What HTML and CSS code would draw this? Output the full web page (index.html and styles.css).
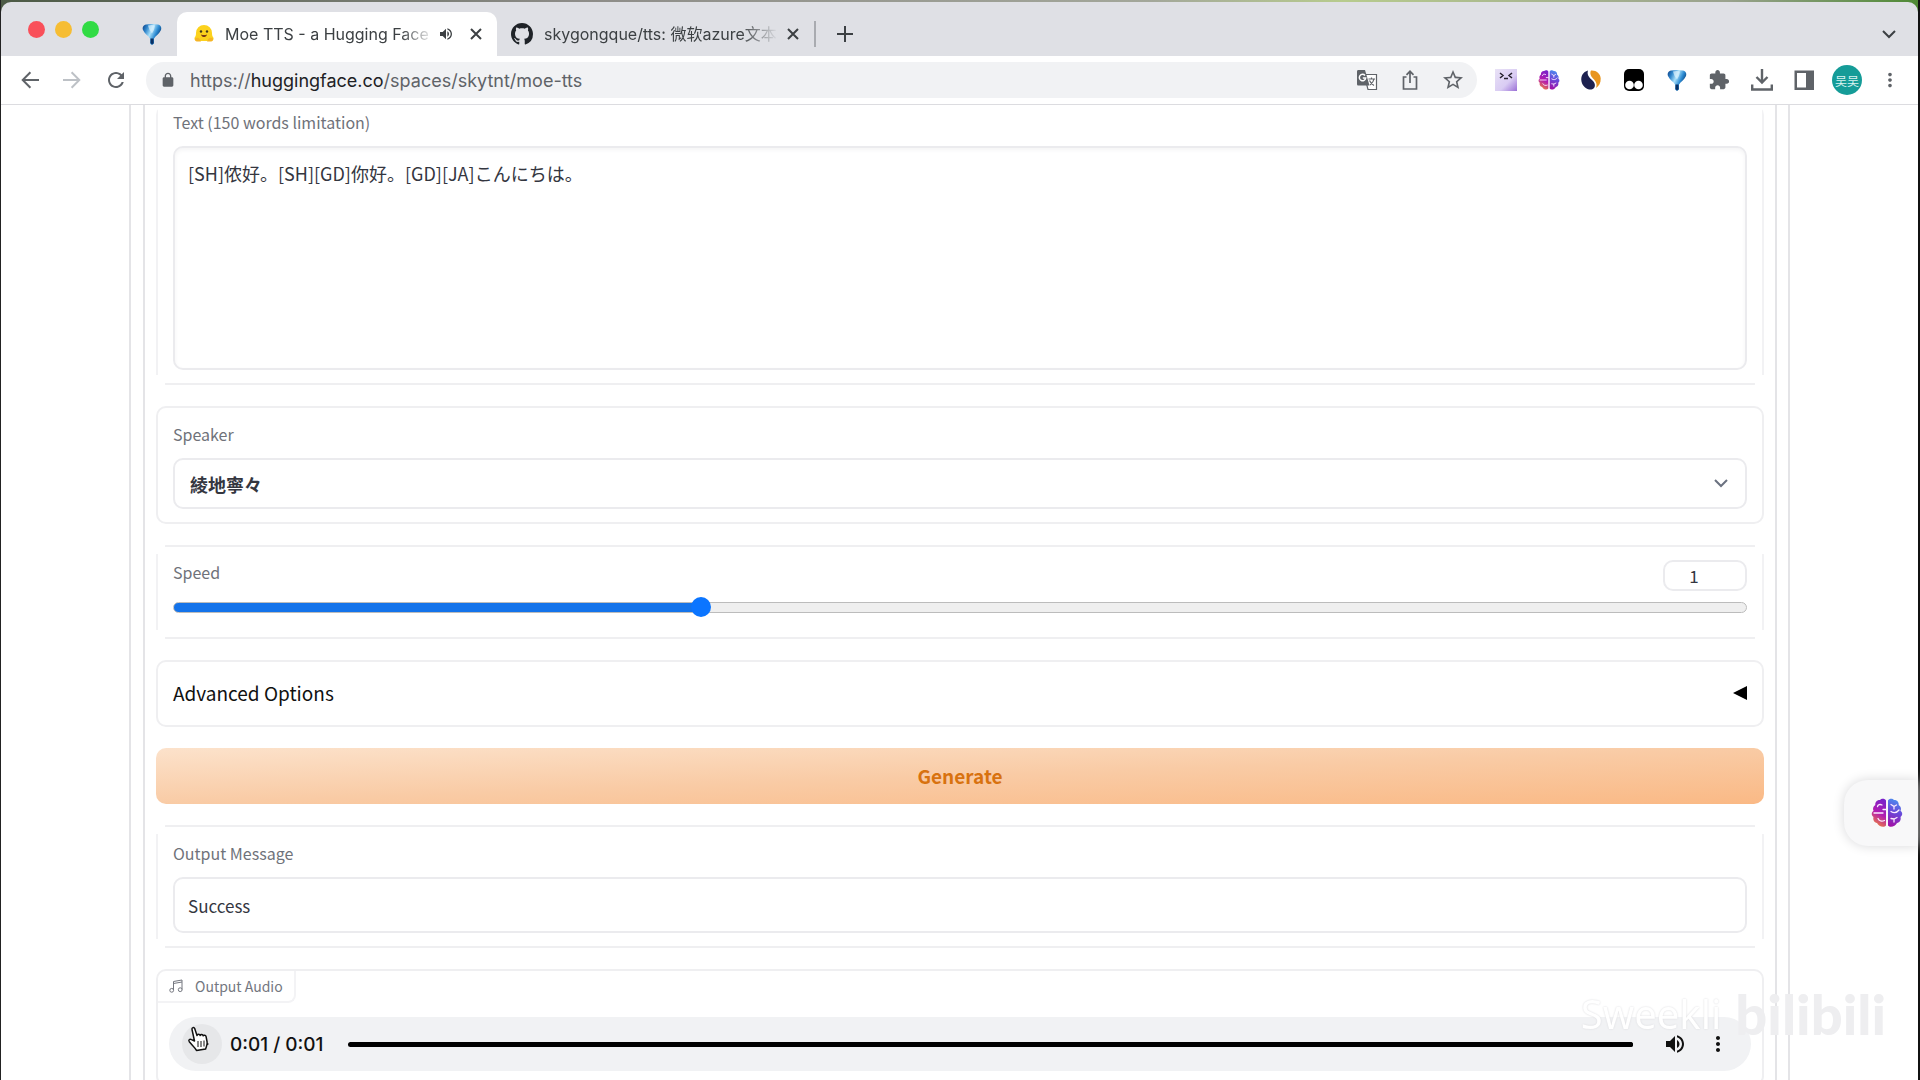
FILE: index.html
```html
<!DOCTYPE html>
<html lang="en">
<head>
  <meta charset="UTF-8">
  <meta name="viewport" content="width=device-width, initial-scale=1.0">
  <title>Moe TTS - a Hugging Face Space</title>
  <link rel="stylesheet" href="styles.css">
</head>
<body>
  <!-- shared icons -->
  <svg class="defs" aria-hidden="true">
    <defs>
      <linearGradient id="gem-fill" x1="0" y1="0" x2="1" y2=".5">
        <stop offset="0" stop-color="#0a3c82"/>
        <stop offset=".25" stop-color="#2f86cc"/>
        <stop offset=".5" stop-color="#a9e0fa"/>
        <stop offset=".75" stop-color="#2b8ad2"/>
        <stop offset="1" stop-color="#06366f"/>
      </linearGradient>
      <linearGradient id="brain-left" x1=".6" y1="0" x2=".3" y2="1">
        <stop offset="0" stop-color="#7a22c9"/>
        <stop offset=".5" stop-color="#b31bb0"/>
        <stop offset="1" stop-color="#f0843c"/>
      </linearGradient>
      <linearGradient id="brain-right" x1=".6" y1="0" x2=".4" y2="1">
        <stop offset="0" stop-color="#4a90f0"/>
        <stop offset=".5" stop-color="#6b45d8"/>
        <stop offset="1" stop-color="#a012a8"/>
      </linearGradient>
      <linearGradient id="face-fill" x1="0" y1="0" x2="1" y2="1">
        <stop offset="0" stop-color="#e9e2f6"/>
        <stop offset=".6" stop-color="#d9ccf3"/>
        <stop offset="1" stop-color="#9a6fd6"/>
      </linearGradient>
    </defs>
    <symbol id="gem" viewBox="0 0 20 22">
      <path fill="url(#gem-fill)" d="M4 1.500Q10 .5 16 1.500C18.500 2 20 4.500 19 7c-1.500 3.500-5.500 6-7 8.500v5L10 22l-2-1.500v-5C6.500 13 2.500 10.500 1 7 0 4.500 1.500 2 4 1.500z"/>
      <path fill="#dff4fd" d="M6 2.500q4-1 7 0-.5 4.500-3 8-3-3.500-4-8z" opacity=".7"/>
      <path fill="#0a2f63" d="M8.500 15.500h3V20L10 21.500 8.500 20z"/>
    </symbol>
    <symbol id="brain" viewBox="0 0 32 30">
      <path fill="url(#brain-left)" d="M15 2.500C14 .5 10.500.3 9 2 6 1.800 4 4 4.300 7 2 8.500 1.500 11 2.500 12.800.2 14.500.2 17.500 2.500 19c-.8 3 .8 5.500 3.500 6 1.500 3.500 7 5 9 2.500z"/>
      <path fill="url(#brain-right)" d="M17 2.500C18 .5 21.500.3 23 2c3-.2 5 2 4.700 5 2.300 1.500 2.800 4 1.800 5.800 2.300 1.700 2.300 4.700 0 6.200.8 3-.8 5.500-3.500 6-1.500 3.500-7 5-9 2.500z"/>
      <path fill="none" stroke="#fbeaff" stroke-width="1.300" stroke-linecap="round" d="M6.500 8.500C7 6.500 9 6 11 7M3 15h9M7 20.500c1 2.500 4 3 6.500 2M12 11.500h3M20 6.500l3 2 2.500-1.500M23 8.500v2.500M20 13.500c3 2 6 1 8-1.500M20 20.500l3 .5 3-1.500M23 21v3"/>
    </symbol>
    <symbol id="close" viewBox="0 0 14 14">
      <path fill="none" stroke="currentColor" stroke-width="2" d="M2 2l10 10M12 2L2 12"/>
    </symbol>
    <symbol id="volume" viewBox="0 0 24 24">
      <path fill="currentColor" d="M3 9v6h4l5 5V4L7 9H3zm13.500 3c0-1.770-1.020-3.290-2.500-4.030v8.050c1.480-.73 2.500-2.250 2.500-4.020zM14 3.230v2.060c2.890.86 5 3.540 5 6.710s-2.110 5.850-5 6.710v2.060c4.010-.91 7-4.490 7-8.770s-2.990-7.860-7-8.770z"/>
    </symbol>
    <symbol id="dots" viewBox="0 0 24 24">
      <path fill="currentColor" d="M12 8c1.100 0 2-.9 2-2s-.9-2-2-2-2 .9-2 2 .9 2 2 2zm0 2c-1.100 0-2 .9-2 2s.9 2 2 2 2-.9 2-2-.9-2-2-2zm0 6c-1.100 0-2 .9-2 2s.9 2 2 2 2-.9 2-2-.9-2-2-2z"/>
    </symbol>
    <symbol id="chevron" viewBox="0 0 14 10">
      <path fill="none" stroke="currentColor" stroke-width="2" d="M1 2l6 6 6-6"/>
    </symbol>
    <symbol id="arrow" viewBox="0 0 24 24">
      <path fill="currentColor" d="M21 11H7.100l6-6L11.700 3.600 3.300 12l8.400 8.400 1.400-1.400-6-6H21z"/>
    </symbol>
  </svg>

  <header class="browser">
    <div class="tab-strip">
      <div class="lights">
        <span class="light red"></span>
        <span class="light yellow"></span>
        <span class="light green"></span>
      </div>
      <button class="pinned" aria-label="Pinned tab"><svg class="icon-gem"><use href="#gem"/></svg></button>
      <div class="tab active">
        <svg class="favicon" viewBox="0 0 20 20">
          <path fill="#fcd21d" d="M10 1a8 8 0 0 1 8 8c0 2 .3 3 1.300 4.500.8 1.500-.3 3.500-2.300 3.500H3C1 17 0 15 .7 13.500 1.800 12 2 11 2 9a8 8 0 0 1 8-8z"/>
          <path fill="#f5b426" d="M1 14.500c2-1.500 4-1 5 1l1 2H3c-1.500 0-2.500-1.500-2-3zM19 14.500c-2-1.500-4-1-5 1l-1 2h4c1.500 0 2.500-1.500 2-3z"/>
          <circle cx="7" cy="7.500" r="1.200" fill="#41381c"/>
          <circle cx="13" cy="7.500" r="1.200" fill="#41381c"/>
          <path fill="#7a3b16" d="M7 10.500c2 .8 4 .8 6 0-.5 2-1.800 2.500-3 2.500s-2.500-.5-3-2.500z"/>
        </svg>
        <span class="tab-title">Moe TTS - a Hugging Face</span>
        <svg class="tab-sound"><use href="#volume"/></svg>
        <button class="tab-close" aria-label="Close tab"><svg><use href="#close"/></svg></button>
      </div>
      <div class="tab">
        <svg class="favicon github" viewBox="0 0 16 16"><path fill="#1f2328" d="M8 0C3.580 0 0 3.580 0 8c0 3.540 2.290 6.530 5.470 7.590.4.070.55-.17.55-.38 0-.19-.01-.82-.01-1.490-2.010.37-2.530-.49-2.690-.94-.09-.23-.48-.94-.82-1.130-.28-.15-.68-.52-.01-.53.63-.01 1.080.58 1.230.82.72 1.210 1.870.87 2.330.66.07-.52.28-.87.51-1.070-1.780-.2-3.640-.89-3.640-3.950 0-.87.31-1.590.82-2.150-.08-.2-.36-1.020.08-2.120 0 0 .67-.21 2.200.82.64-.18 1.320-.27 2-.27s1.360.09 2 .27c1.530-1.040 2.200-.82 2.200-.82.44 1.100.16 1.920.08 2.120.51.56.82 1.270.82 2.150 0 3.070-1.870 3.750-3.650 3.950.29.25.54.73.54 1.480 0 1.070-.01 1.930-.01 2.200 0 .21.15.46.55.38A8.010 8.010 0 0 0 16 8c0-4.420-3.580-8-8-8z"/></svg>
        <span class="tab-title">skygongque/tts: 微软azure文本</span>
        <button class="tab-close" aria-label="Close tab"><svg><use href="#close"/></svg></button>
      </div>
      <button class="new-tab" aria-label="New tab"><svg viewBox="0 0 18 18"><path fill="none" stroke="currentColor" stroke-width="2" d="M9 1v16M1 9h16"/></svg></button>
      <button class="tab-search" aria-label="Search tabs"><svg><use href="#chevron"/></svg></button>
    </div>

    <div class="toolbar">
      <nav class="nav-buttons">
        <button aria-label="Back"><svg><use href="#arrow"/></svg></button>
        <button class="forward" aria-label="Forward"><svg><use href="#arrow"/></svg></button>
        <button aria-label="Reload"><svg viewBox="0 0 24 24"><path fill="currentColor" d="M17.650 6.350C16.200 4.900 14.210 4 12 4c-4.420 0-7.990 3.580-7.990 8s3.570 8 7.990 8c3.730 0 6.840-2.550 7.730-6h-2.080c-.82 2.330-3.040 4-5.650 4-3.310 0-6-2.690-6-6s2.690-6 6-6c1.660 0 3.140.69 4.220 1.780L13 11h7V4l-2.350 2.350z"/></svg></button>
      </nav>
      <div class="address">
        <svg class="lock" viewBox="0 0 24 24"><path fill="currentColor" d="M18 8h-1V6c0-2.760-2.240-5-5-5S7 3.240 7 6v2H6c-1.100 0-2 .9-2 2v10c0 1.100.9 2 2 2h12c1.100 0 2-.9 2-2V10c0-1.100-.9-2-2-2zM9 6c0-1.660 1.340-3 3-3s3 1.340 3 3v2H9V6z"/></svg>
        <a class="url" href="#">https://<b>huggingface.co</b>/spaces/skytnt/moe-tts</a>
        <div class="address-icons">
          <button aria-label="Translate">
            <svg viewBox="0 0 22 22">
              <path fill="#fff" stroke="currentColor" stroke-width="1.200" d="M8 5.500h12.500V20.500H12z"/>
              <path fill="currentColor" d="M2.500 1H9l4.500 15.500h-11C1.500 16.500 1 16 1 15V2.500C1 1.500 1.500 1 2.500 1z"/>
              <path fill="none" stroke="#fff" stroke-width="1.500" d="M9 6.500A3.200 3.200 0 1 0 9.700 9H6.800"/>
              <path fill="none" stroke="currentColor" stroke-width="1.200" d="M12.500 10h6.500M15.500 8.500V10M18 10c-.5 2.500-2 4.500-4 6M13.500 11.500c1 2 2.500 4 4.500 5"/>
            </svg>
          </button>
          <button aria-label="Share"><svg viewBox="0 0 22 22"><path fill="none" stroke="currentColor" stroke-width="1.700" d="M7.500 8H4.500v12h13V8h-3M11 14V2.500M7.500 5.800L11 2.300l3.500 3.500"/></svg></button>
          <button aria-label="Bookmark"><svg viewBox="1 1 22 22"><path fill="currentColor" d="M22 9.240l-7.190-.62L12 2 9.190 8.630 2 9.240l5.460 4.730L5.820 21 12 17.270 18.180 21l-1.630-7.030L22 9.240zM12 15.400l-3.760 2.270 1-4.280-3.320-2.880 4.380-.38L12 6.100l1.710 4.040 4.380.38-3.320 2.880 1 4.280L12 15.400z"/></svg></button>
        </div>
      </div>
      <div class="extensions">
        <button aria-label="Face extension">
          <svg viewBox="0 0 22 22"><path fill="url(#face-fill)" d="M0 0h22v22H0z"/><path fill="none" stroke="#26222e" stroke-width="1.500" d="M5 4l3 2.500L5 9M17 4l-3 2.500L17 9M9 9.500h4"/></svg>
        </button>
        <button aria-label="Brain extension"><svg><use href="#brain"/></svg></button>
        <button aria-label="Swirl extension">
          <svg viewBox="0 0 22 22"><path fill="#1d2150" d="M8 1.500C3 3 .5 7 1.500 12.500 2.500 17.500 7 21 11.500 20.500c4-.8 4.500-5.500 1.500-8.500C9.500 9 6.500 6 8 1.500z"/><path fill="#e8951f" d="M11 1.500c5-.5 9.500 3 9.700 8 .2 4.500-1.700 7.500-4.700 9.500 1.500-4 0-6.500-3-9.500-2-2.300-3.500-5-2-8z"/></svg>
        </button>
        <button aria-label="Mask extension">
          <svg viewBox="0 0 22 22"><rect x="1" width="20" height="22" rx="5" fill="#000"/><circle cx="6.500" cy="16" r="4.300" fill="#fff"/><circle cx="15.500" cy="16" r="4.300" fill="#fff"/></svg>
        </button>
        <button aria-label="Gem extension"><svg><use href="#gem"/></svg></button>
        <button aria-label="Extensions"><svg viewBox="0 0 24 24"><path fill="currentColor" d="M20.500 11H19V7c0-1.100-.9-2-2-2h-4V3.500C13 2.120 11.880 1 10.500 1S8 2.120 8 3.500V5H4c-1.100 0-1.990.9-1.990 2v3.800H3.500c1.490 0 2.700 1.210 2.700 2.700s-1.210 2.700-2.700 2.700H2V20c0 1.100.9 2 2 2h3.800v-1.500c0-1.490 1.210-2.700 2.700-2.700 1.490 0 2.700 1.210 2.700 2.700V22H17c1.100 0 2-.9 2-2v-4h1.500c1.380 0 2.500-1.120 2.500-2.500S21.880 11 20.500 11z"/></svg></button>
        <button aria-label="Downloads"><svg viewBox="0 0 22 22"><path fill="none" stroke="currentColor" stroke-width="2.400" d="M11 0v13M5.500 8l5.500 5.500L16.500 8M1.200 15.500v5h19.600v-5"/></svg></button>
        <button aria-label="Side panel"><svg viewBox="0 0 22 22"><path fill="currentColor" fill-rule="evenodd" d="M1.500 1.500h19.500v19.500H1.500zM4 4v14.500h9V4z"/></svg></button>
        <button class="avatar" aria-label="Profile">吴吴</button>
        <button aria-label="Menu"><svg><use href="#dots"/></svg></button>
      </div>
    </div>
  </header>

  <main class="page">
    <div class="outer">
      <div class="inner">
        <section class="block open first">
          <label for="text">Text (150 words limitation)</label>
          <textarea id="text" class="field">[SH]侬好。[SH][GD]你好。[GD][JA]こんにちは。</textarea>
        </section>

        <section class="block">
          <label for="speaker">Speaker</label>
          <div class="select-wrap">
            <select id="speaker" class="field">
              <option>綾地寧々</option>
            </select>
            <svg><use href="#chevron"/></svg>
          </div>
        </section>

        <section class="block open speed">
          <div class="speed-head">
            <label for="speed">Speed</label>
            <input type="number" class="field" aria-label="Speed value" value="1">
          </div>
          <input type="range" id="speed" min="0.5" max="2" step="0.1" value="1">
        </section>

        <button class="block accordion">
          <span>Advanced Options</span>
          <svg viewBox="0 0 14 14"><path d="M14 0v14L0 7z"/></svg>
        </button>

        <button class="generate">Generate</button>

        <section class="block open">
          <label for="message">Output Message</label>
          <input type="text" id="message" class="field" value="Success" readonly>
        </section>

        <section class="block audio">
          <div class="audio-label">
            <svg viewBox="0 0 14 14"><path fill="none" stroke="currentColor" d="M4.500 11V2.500l8.500-1.500v9.500M4.500 4.500L13 3"/><circle cx="2.700" cy="11.300" r="1.900" fill="none" stroke="currentColor"/><circle cx="11.200" cy="10.700" r="1.900" fill="none" stroke="currentColor"/></svg>
            Output Audio
          </div>
          <div class="player">
            <button class="play" aria-label="Play">
              <svg viewBox="0 0 24 24"><path d="M8 5v14l11-7z"/></svg>
              <svg class="cursor" viewBox="0 0 22 26"><path fill="#fff" stroke="#111" stroke-width="1.500" stroke-linejoin="round" d="M7.500 15L5 3.500C4.600 1.500 7 .8 7.700 2.600L10 9.500c.3-1.700 2.700-1.800 3.200 0 .5-1.400 2.700-1.200 3 .3.700-1 2.600-.7 2.900.8l1 5.400c.5 3-1 5-1.500 7L9.500 24.500C8.500 22 4.500 18.500 2.300 15.700 1 13.800 3 12.500 4.500 13.600z"/><path fill="none" stroke="#111" d="M11 15v6M14 15v6M17 14.500v6"/></svg>
            </button>
            <span class="time">0:01 / 0:01</span>
            <input type="range" class="seek" aria-label="Position" min="0" max="1" step="0.01" value="1">
            <button aria-label="Mute"><svg><use href="#volume"/></svg></button>
            <button aria-label="More"><svg><use href="#dots"/></svg></button>
          </div>
        </section>
      </div>
    </div>
  </main>

  <button class="assistant" aria-label="Assistant"><svg><use href="#brain"/></svg></button>

  <div class="watermark">
    <span class="author">Sweekli</span>
    <span class="brand">bilibili</span>
  </div>
</body>
</html>
```
FILE: styles.css
```css
* {
  box-sizing: border-box;
}
body {
  margin: 0;
  height: 100vh;
  display: flex;
  flex-direction: column;
  overflow: hidden;
  background-color: #fff;
  border-left: 1px solid #222;
  border-right: 2px solid #111;
  font-family: "Noto Sans CJK SC", "Noto Sans", sans-serif;
}
button {
  padding: 0;
  border: none;
  background: none;
  color: inherit;
  font: inherit;
  cursor: pointer;
}
svg {
  display: block;
}
.defs {
  position: absolute;
  width: 0;
  height: 0;
}

/* browser chrome */
.browser {
  flex: none;
  background: linear-gradient(to right, #4c5a45, #8d8c88 30%, #a3a79a 60%, #b7cb8d 70%, #9aa28e 90%, #4f8a35);
  padding-top: 2px;
  border-bottom: 1px solid #dcdce0;
  font-family: Inter, "Noto Sans CJK SC", sans-serif;
  color: #3c4043;
}
.tab-strip {
  display: flex;
  align-items: center;
  height: 54px;
  padding: 10px 18px 0 27px;
  background-color: #dfe0e5;
  border-radius: 10px 10px 0 0;
}
.lights {
  display: flex;
  gap: 10px;
  padding-bottom: 10px;
}
.light {
  width: 17px;
  height: 17px;
  border-radius: 50%;
}
.red { background-color: #f9505a; }
.yellow { background-color: #f6bd33; }
.green { background-color: #31db44; }
.pinned {
  margin: 0 15px 0 43px;
}
.icon-gem {
  width: 20px;
  height: 22px;
}
.tab {
  display: flex;
  align-items: center;
  width: 317px;
  height: 44px;
  padding: 0 14px;
  font-size: 16px;
}
.tab.active {
  width: 320px;
  padding-left: 17px;
  background-color: #fff;
  border-radius: 10px 10px 0 0;
}
.favicon {
  flex: none;
  width: 20px;
  height: 20px;
  margin-right: 11px;
}
.github {
  width: 22px;
  height: 22px;
}
.tab-title {
  flex: 1;
  white-space: nowrap;
  line-height: 24px;
  -webkit-mask-image: linear-gradient(to right, #000 84%, transparent);
  mask-image: linear-gradient(to right, #000 84%, transparent);
}
.tab-sound {
  width: 16px;
  height: 16px;
  margin: 0 7px 0 4px;
}
.tab-close {
  padding: 6px 0 6px 8px;
}
.tab-close svg {
  width: 14px;
  height: 14px;
}
.new-tab {
  padding: 4px 20px;
  border-left: 2px solid #a9abb0;
}
.new-tab svg {
  width: 18px;
  height: 18px;
}
.tab-search {
  margin-left: auto;
  padding: 6px 4px;
}
.tab-search svg {
  width: 14px;
  height: 10px;
}
.toolbar {
  display: flex;
  align-items: center;
  height: 48px;
  padding: 0 7px;
  background-color: #fff;
  color: #5f6368;
}
.nav-buttons {
  display: grid;
  grid-template-columns: repeat(3, 43px);
  margin-right: 9px;
}
.toolbar button {
  display: flex;
  align-items: center;
  justify-content: center;
}
.toolbar svg {
  width: 22px;
  height: 22px;
}
.nav-buttons svg {
  width: 24px;
  height: 24px;
}
.forward {
  color: #bdc1c6;
  transform: scaleX(-1);
}
.address {
  flex: 1;
  display: flex;
  align-items: center;
  height: 36px;
  padding: 0 3px 0 14px;
  background-color: #f1f2f4;
  border-radius: 18px;
}
.toolbar .lock {
  width: 16px;
  height: 16px;
  margin-right: 14px;
}
.url {
  flex: 1;
  font-size: 18px;
  color: #5f6368;
  text-decoration: none;
}
.url b {
  font-weight: 400;
  color: #202124;
}
.address-icons {
  display: grid;
  grid-template-columns: repeat(3, 43px);
}
.extensions {
  display: grid;
  grid-template-columns: repeat(10, 1fr);
  align-items: center;
  width: 426px;
  margin-left: 8px;
}
.toolbar .avatar {
  justify-self: center;
  width: 30px;
  height: 30px;
  border-radius: 50%;
  background-color: #159c98;
  color: #d9f3f1;
  font-size: 12px;
}

/* gradio app */
.page {
  flex: 1;
  min-height: 0;
  overflow: hidden;
  padding: 0 128px;
}
.outer,
.inner {
  padding: 0 11px;
  border: solid #e4e4e7;
  border-width: 0 2px;
}
.outer {
  padding-left: 12px;
}
.inner {
  display: flex;
  flex-direction: column;
  gap: 21px;
}
.block {
  padding: 14px 15px 13px;
  border: 2px solid #efeff1;
  border-radius: 10px;
  background-color: #fff;
}
/* stacked form parts: the sides stop short of the corners */
.block.open {
  border-color: transparent;
  background:
    linear-gradient(#efeff1, #efeff1) center top / calc(100% - 18px) 2px no-repeat border-box,
    linear-gradient(#efeff1, #efeff1) center bottom / calc(100% - 18px) 2px no-repeat border-box,
    linear-gradient(#f2f2f4, #f2f2f4) left center / 2px calc(100% - 18px) no-repeat border-box,
    linear-gradient(#f2f2f4, #f2f2f4) right center / 2px calc(100% - 18px) no-repeat border-box;
}
.block.first {
  padding-top: 5px;
  border-top: none;
  background:
    linear-gradient(#efeff1, #efeff1) center bottom / calc(100% - 18px) 2px no-repeat border-box,
    linear-gradient(#f2f2f4, #f2f2f4) left top / 2px calc(100% - 10px) no-repeat border-box,
    linear-gradient(#f2f2f4, #f2f2f4) right top / 2px calc(100% - 10px) no-repeat border-box;
}
label {
  display: block;
  margin-bottom: 12px;
  font-size: 16px;
  line-height: 24px;
  color: #6f727a;
}
.field {
  display: block;
  width: 100%;
  height: 56px;
  padding: 0 13px;
  border: 2px solid #ebebee;
  border-radius: 10px;
  background-color: #fff;
  color: #34363f;
  font-family: inherit;
  font-size: 17px;
  outline: none;
}
textarea.field {
  height: 224px;
  padding: 11px 13px;
  line-height: 28px;
  font-size: 18px;
  resize: none;
  box-shadow: inset 0 2px 4px #f4f4f5;
}
.select-wrap {
  position: relative;
}
select.field {
  height: 51px;
  appearance: none;
  font-size: 18px;
  font-weight: 700;
  padding-left: 15px;
}
.select-wrap svg {
  position: absolute;
  right: 19px;
  top: 20px;
  width: 14px;
  height: 10px;
  color: #6b7280;
}
.speed {
  padding: 13px 15px 20px;
}
.speed-head {
  display: flex;
  justify-content: space-between;
  margin-bottom: 6px;
}
.speed-head label {
  margin: 0;
}
.speed-head .field {
  width: 84px;
  height: 31px;
  padding: 0 22px 0 0;
  text-align: center;
  appearance: textfield;
}
.speed-head .field::-webkit-inner-spin-button {
  display: none;
}
input[type="range"] {
  display: block;
  width: 100%;
  height: 20px;
  margin: 0;
  appearance: none;
  background: none;
}
#speed::-webkit-slider-runnable-track {
  height: 11px;
  border: 1px solid #bcbcbc;
  border-radius: 6px;
  background: linear-gradient(to right, #1473ea 33.5%, #efefef 33.5%);
}
#speed::-webkit-slider-thumb {
  appearance: none;
  width: 20px;
  height: 20px;
  margin-top: -6px;
  border-radius: 50%;
  background-color: #0b75ff;
}
.accordion {
  display: flex;
  align-items: center;
  justify-content: space-between;
  height: 67px;
  padding: 0 15px 2px;
  font-size: 19px;
  color: #111;
}
.accordion svg {
  width: 14px;
  height: 14px;
}
.generate {
  height: 56px;
  padding-bottom: 2px;
  border-radius: 10px;
  background: linear-gradient(to bottom right, #fce2cb, #f9cba5 50%, #fab985);
  color: #d8720f;
  font-size: 19px;
  font-weight: 700;
}
.audio {
  padding: 0 11px 13px;
}
.audio-label {
  display: flex;
  align-items: center;
  gap: 12px;
  width: 138px;
  height: 32px;
  margin: 0 0 14px -11px;
  padding-left: 11px;
  border: solid #f3f3f5;
  border-width: 0 2px 2px 0;
  border-radius: 8px 0 8px 0;
  white-space: nowrap;
  font-size: 14px;
  color: #74777f;
}
.audio-label svg {
  width: 14px;
  height: 14px;
}
.player {
  display: flex;
  align-items: center;
  height: 54px;
  padding: 0 21px 0 13px;
  border-radius: 27px;
  background-color: #f1f2f4;
  color: #111;
}
.player button svg {
  width: 24px;
  height: 24px;
}
.player .play {
  position: relative;
  padding: 8px;
  border-radius: 50%;
  background-color: #e6e7e9;
}
.player .play .cursor {
  position: absolute;
  left: 5px;
  top: 2px;
  width: 22px;
  height: 26px;
}
.time {
  margin: 0 24px 0 8px;
  font-family: Inter, sans-serif;
  font-size: 19px;
  font-weight: 500;
}
.player .seek {
  flex: 1;
  width: auto;
  margin-right: 30px;
}
.seek::-webkit-slider-runnable-track {
  height: 5px;
  border-radius: 3px;
  background-color: #000;
}
.seek::-webkit-slider-thumb {
  appearance: none;
  width: 5px;
  height: 5px;
  border-radius: 50%;
  background-color: #000;
}
.seek + button {
  margin-right: 19px;
}

/* things that float over the page */
.assistant {
  position: fixed;
  right: 2px;
  top: 780px;
  width: 74px;
  height: 66px;
  padding-left: 27px;
  border-radius: 24px 0 0 24px;
  background-color: #f8f8f9;
  box-shadow: 0 0 12px #d8d8da;
}
.assistant svg {
  width: 32px;
  height: 30px;
}
.watermark {
  position: fixed;
  right: 34px;
  bottom: 34px;
  display: flex;
  align-items: center;
  gap: 14px;
  line-height: 64px;
  pointer-events: none;
}
.author {
  font-family: "Noto Sans", sans-serif;
  font-size: 40px;
  color: #fff;
  text-shadow: 0 0 2px #d6d6d9;
}
.brand {
  font-family: Lato, sans-serif;
  font-size: 56px;
  font-weight: 900;
  color: #eeeef0;
}
```
